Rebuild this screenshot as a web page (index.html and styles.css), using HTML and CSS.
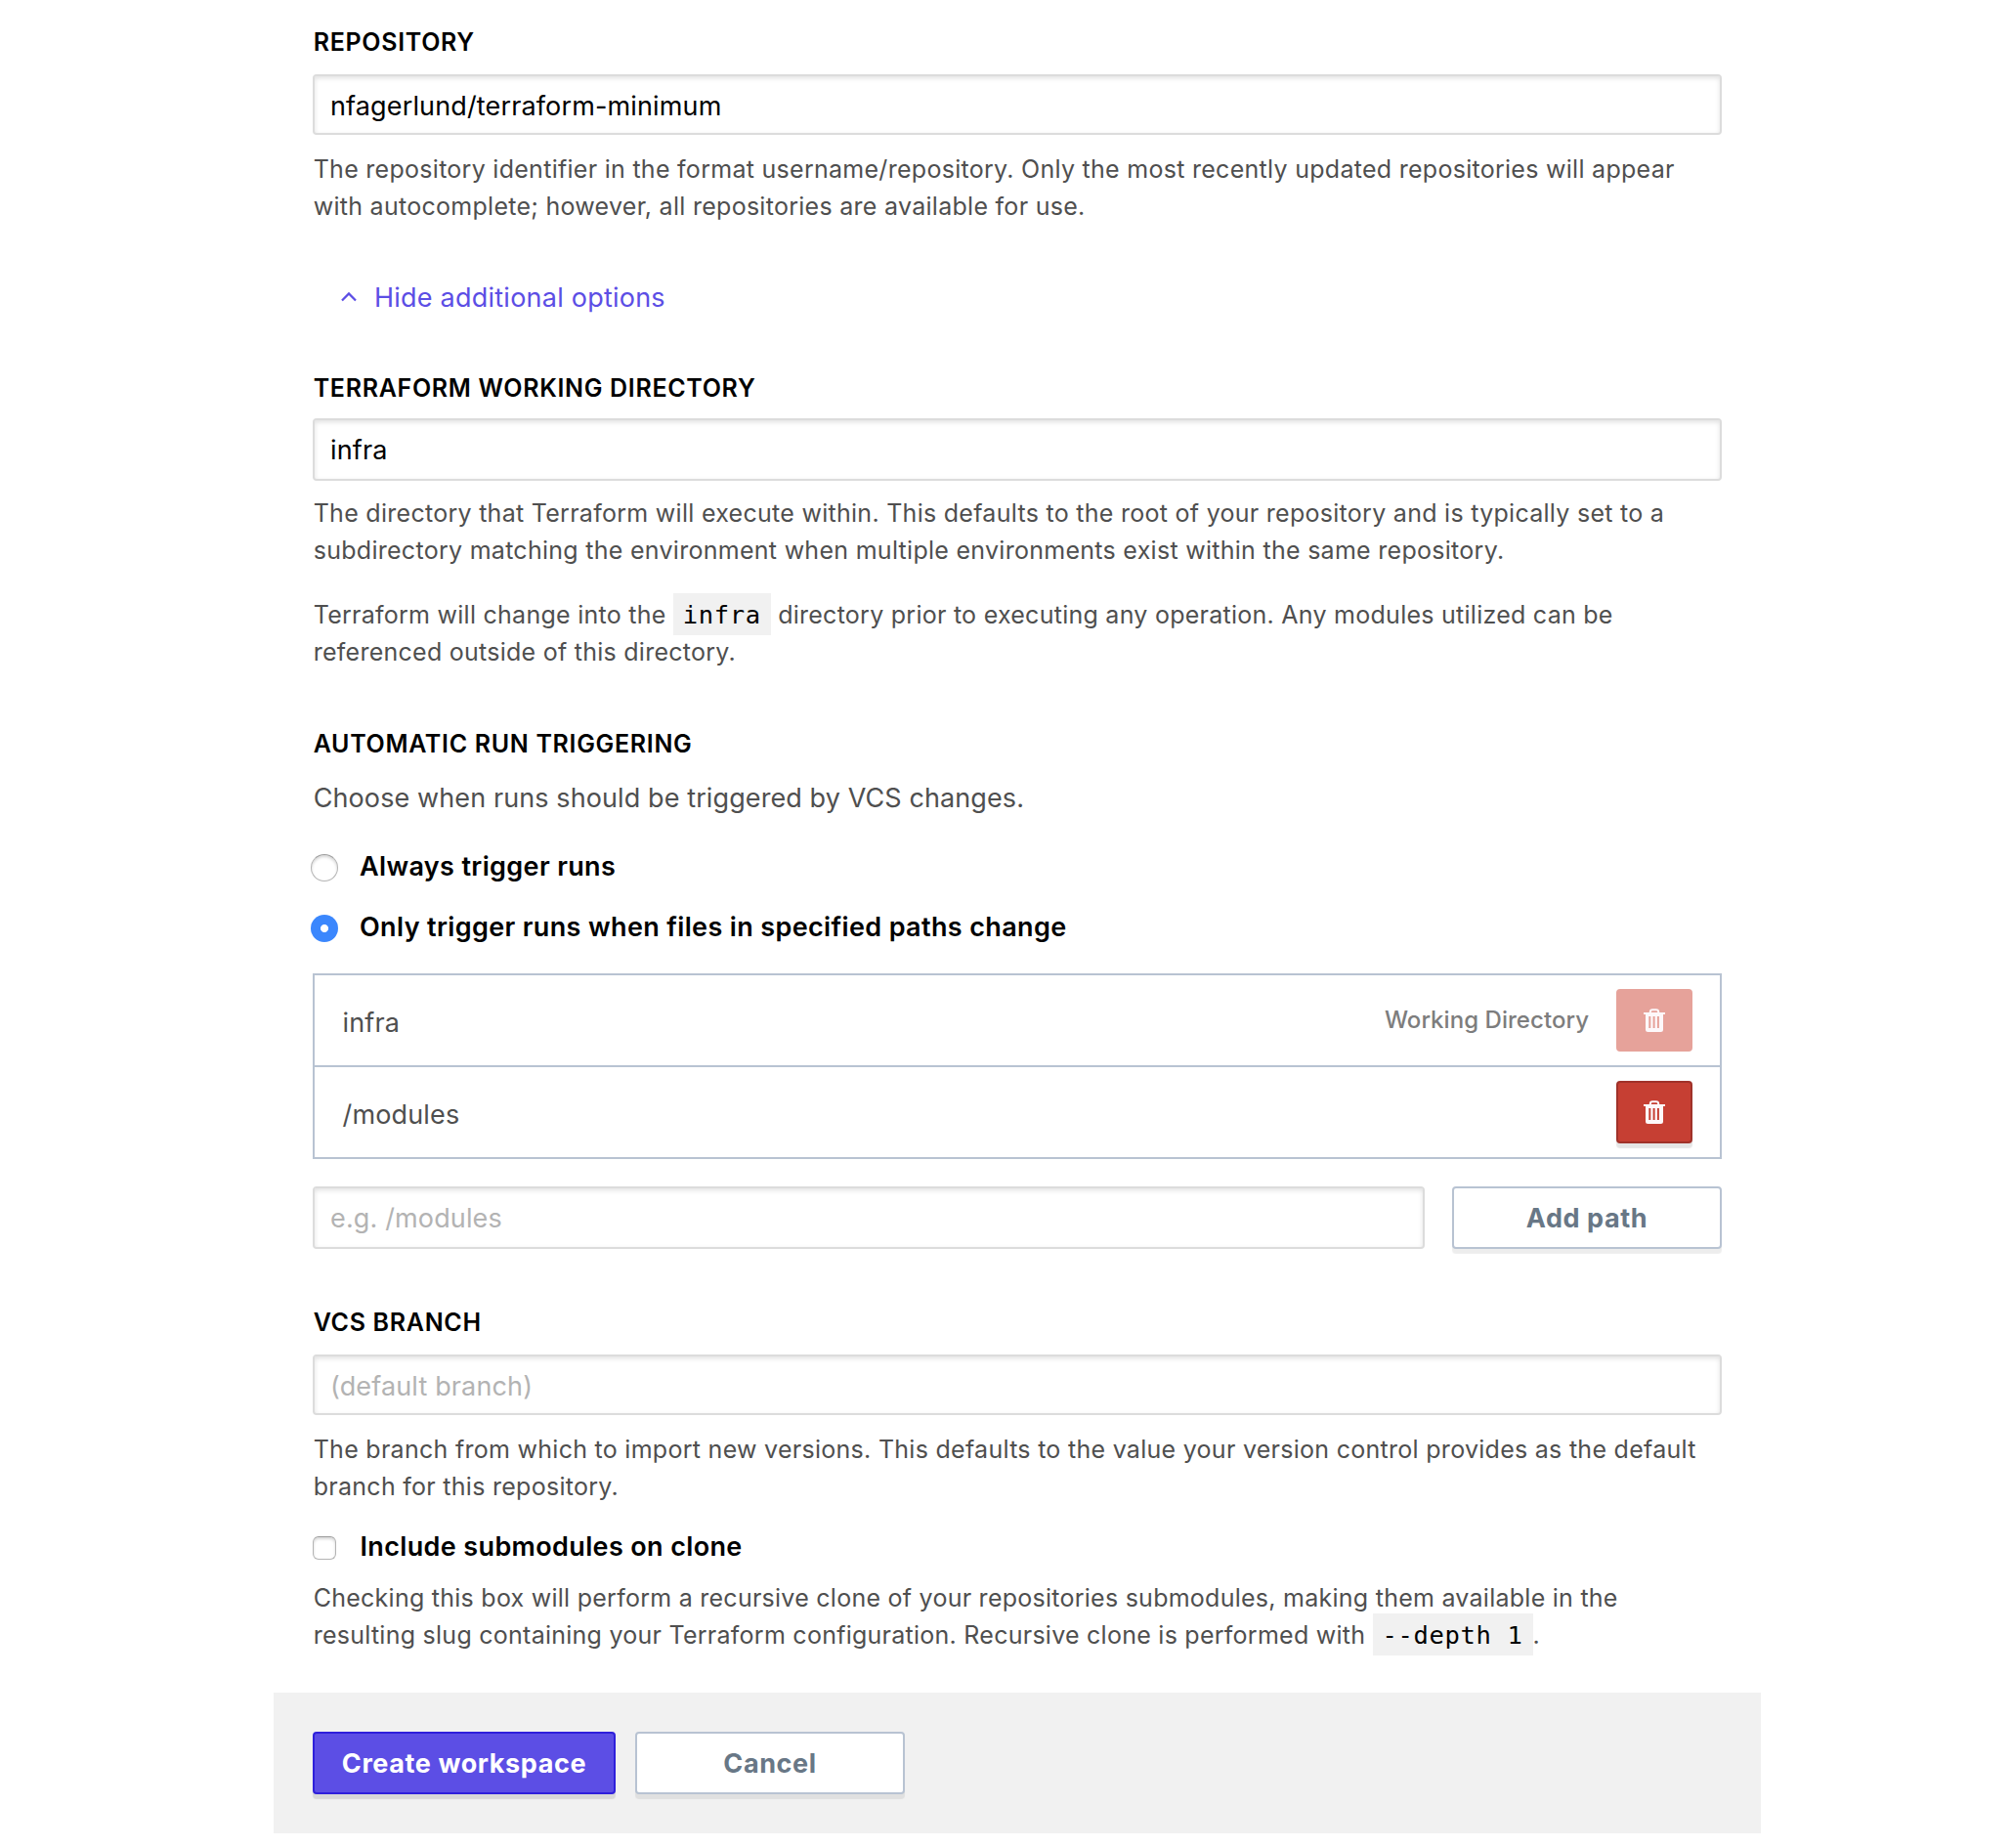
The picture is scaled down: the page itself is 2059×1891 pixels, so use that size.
FILE: index.html
```
<!DOCTYPE html>
<html lang="en">
<head>
<meta charset="utf-8">
<title>New workspace</title>
<link rel="stylesheet" href="styles.css">
</head>
<body>
<form class="page">
  <main class="fields">
    <label class="label" for="repo">REPOSITORY</label>
    <input class="input input-short" id="repo" type="text" value="nfagerlund/terraform-minimum">
    <p class="help">The repository identifier in the format username/repository. Only the most recently updated repositories will appear<br>with autocomplete; however, all repositories are available for use.</p>

    <a class="toggle"><svg class="chevron" width="18" height="12" viewBox="0 0 18 12"><path d="M2 9.600 9 2.400l7 7.200" fill="none" stroke="currentColor" stroke-width="2.200"/></svg>Hide additional options</a>

    <label class="label label-dir" for="dir">TERRAFORM WORKING DIRECTORY</label>
    <input class="input" id="dir" type="text" value="infra">
    <p class="help">The directory that Terraform will execute within. This defaults to the root of your repository and is typically set to a<br>subdirectory matching the environment when multiple environments exist within the same repository.</p>
    <p class="help help-next">Terraform will change into the <code>infra</code> directory prior to executing any operation. Any modules utilized can be<br>referenced outside of this directory.</p>

    <h2 class="label label-trigger">AUTOMATIC RUN TRIGGERING</h2>
    <p class="intro">Choose when runs should be triggered by VCS changes.</p>
    <label class="choice"><input class="radio" type="radio" name="trigger">Always trigger runs</label>
    <label class="choice choice-next"><input class="radio" type="radio" name="trigger" checked>Only trigger runs when files in specified paths change</label>

    <ul class="paths">
      <li class="path">
        <span class="path-name">infra</span>
        <span class="path-note">Working Directory</span>
        <button class="delete delete-off" type="button" aria-label="Delete infra" disabled>
          <svg width="22" height="24" viewBox="0 0 22 24"><path d="M6.8 5V3.6Q6.8 1.2 9.2 1.2h3.6q2.4 0 2.4 2.4V5" fill="none" stroke="currentColor" stroke-width="2"/><path fill="currentColor" fill-rule="evenodd" d="M0 4h22v2h-2v15.5q0 2.5-2.5 2.5h-13Q2 24 2 21.500V6H0zM5.300 8v12h2V8zM9.600 8v12h2V8zM13.900 8v12h2V8z"/></svg>
        </button>
      </li>
      <li class="path">
        <span class="path-name">/modules</span>
        <button class="delete" type="button" aria-label="Delete /modules">
          <svg width="22" height="24" viewBox="0 0 22 24"><path d="M6.8 5V3.6Q6.8 1.2 9.2 1.2h3.6q2.4 0 2.4 2.4V5" fill="none" stroke="currentColor" stroke-width="2"/><path fill="currentColor" fill-rule="evenodd" d="M0 4h22v2h-2v15.5q0 2.5-2.5 2.5h-13Q2 24 2 21.500V6H0zM5.300 8v12h2V8zM9.600 8v12h2V8zM13.900 8v12h2V8z"/></svg>
        </button>
      </li>
    </ul>
    <div class="add">
      <input class="input" type="text" placeholder="e.g. /modules">
      <button class="button button-plain" type="button">Add path</button>
    </div>

    <label class="label label-branch" for="branch">VCS BRANCH</label>
    <input class="input input-short" id="branch" type="text" placeholder="(default branch)">
    <p class="help">The branch from which to import new versions. This defaults to the value your version control provides as the default<br>branch for this repository.</p>
    <label class="choice choice-check"><input class="checkbox" type="checkbox">Include submodules on clone</label>
    <p class="help help-check">Checking this box will perform a recursive clone of your repositories submodules, making them available in the<br>resulting slug containing your Terraform configuration. Recursive clone is performed with <code>--depth 1</code>.</p>
  </main>
  <footer class="actions">
    <button class="button button-primary" type="button">Create workspace</button>
    <button class="button button-plain" type="button">Cancel</button>
  </footer>
</form>
</body>
</html>
```
FILE: styles.css
```
* {
  box-sizing: border-box;
}

body {
  margin: 0;
  background: #fff;
  color: #4f4f4f;
  font-family: Inter, "Liberation Sans", sans-serif;
}

input,
button {
  margin: 0;
  font-family: inherit;
}

.page {
  width: 1522px;
  margin-left: 280px;
}

.fields {
  display: flex;
  flex-direction: column;
  padding: 24px 40px 40px;
}

.label {
  margin: 0 0 14px;
  padding-left: 0.7px;
  color: #000;
  font-size: 25px;
  font-weight: 600;
  line-height: 38px;
  letter-spacing: 0.68px;
}

.label-dir {
  margin: 53px 0 12px;
}

.label-trigger {
  margin: 56px 0 17px;
}

.label-branch {
  margin-top: 56px;
}

.input {
  width: 100%;
  height: 64px;
  padding: 0 16px;
  border: 2px solid #dcdcdc;
  border-radius: 4px;
  background: #fff;
  box-shadow: inset 0 2px 5px rgba(0, 0, 0, 0.12);
  color: #000;
  font-size: 27px;
  letter-spacing: 0.14px;
  outline: none;
}

.input-short {
  height: 62px;
  padding-top: 2px;
}

.input::placeholder {
  color: #b3b3b3;
  opacity: 1;
}

.help {
  margin: 14px 0 0;
  padding-left: 0.7px;
  font-size: 25px;
  line-height: 38px;
  letter-spacing: 0.28px;
  white-space: nowrap;
}

.input-short + .help {
  margin-top: 16px;
}

.help-next {
  margin-top: 28px;
  letter-spacing: 0.26px;
}

.help-check {
  margin-top: 13px;
  letter-spacing: 0.256px;
}

code {
  padding: 7px 10px 6px;
  background: #f1f1f1;
  color: #000;
  font-family: "DejaVu Sans Mono", monospace;
  font-size: 25.5px;
  line-height: 1;
  letter-spacing: 0.65px;
}

.toggle {
  display: flex;
  align-items: center;
  gap: 17px;
  margin: 55px 0 0 28px;
  color: #5c4ee5;
  font-size: 27px;
  line-height: 40px;
  letter-spacing: 0.23px;
}

.chevron {
  margin-top: -2px;
}

.intro {
  margin: 0 0 30px;
  padding-left: 0.7px;
  font-size: 27px;
  line-height: 40px;
  letter-spacing: 0.1px;
}

.choice {
  display: flex;
  align-items: center;
  gap: 22px;
  color: #000;
  font-size: 27px;
  font-weight: 600;
  line-height: 40px;
  letter-spacing: 0.36px;
}

.choice-next {
  margin-top: 22px;
}

.choice-check {
  gap: 24.5px;
  margin-top: 23px;
}

.radio,
.checkbox {
  flex: none;
  appearance: none;
  border: 1px solid #b4b4b4;
  border-top-color: #9c9c9c;
  background: #fff;
  box-shadow: inset 0 2px 3px rgba(0, 0, 0, 0.16);
}

.radio {
  width: 28px;
  height: 28px;
  margin: 2px 0 0 -2px;
  border-radius: 50%;
}

.radio:checked {
  border: 0;
  background: radial-gradient(circle, #fff 3.6px, #3b87fd 4.4px);
  box-shadow: none;
}

.checkbox {
  width: 24px;
  height: 24px;
  margin-top: 2px;
  border-radius: 6px;
}

.paths {
  margin: 27px 0 28px;
  padding: 0;
  border: 2px solid #b8c3d2;
  list-style: none;
}

.path {
  display: flex;
  align-items: center;
  height: 92px;
  padding: 0 28px;
}

.path + .path {
  height: 94px;
  border-top: 2px solid #b8c3d2;
}

.path-name {
  flex: 1;
  padding: 6px 0 0 0.5px;
  font-size: 27px;
  line-height: 40px;
  letter-spacing: 0.15px;
}

.path-note {
  margin-right: 28px;
  color: #7d7d7d;
  font-size: 24px;
  font-weight: 500;
  line-height: 38px;
  letter-spacing: 0.05px;
}

.delete {
  display: flex;
  align-items: center;
  justify-content: center;
  width: 78px;
  height: 64px;
  padding: 0;
  border: 2px solid #a0322a;
  border-radius: 4px;
  background: #c63f33;
  box-shadow: 0 5px 1px rgba(0, 0, 0, 0.1);
  color: #fdf8fa;
}

.delete-off {
  border-color: #e6a29a;
  background: #e6a29a;
  box-shadow: none;
}

.add {
  display: flex;
  gap: 28px;
}

.add .input {
  flex: 1;
}

.button {
  height: 64px;
  padding: 0;
  border: 2px solid;
  border-radius: 4px;
  font-size: 27px;
  font-weight: 700;
  letter-spacing: 0.6px;
}

.button-plain {
  width: 276px;
  border-color: #b8c3d2;
  background: #fff;
  box-shadow: 0 5px 1px rgba(0, 0, 0, 0.07);
  color: #687786;
}

.button-primary {
  width: 310px;
  border-color: #2f20db;
  background: #5c4ee5;
  box-shadow: 0 5px 1px rgba(0, 0, 0, 0.1);
  color: #fff;
}

.actions {
  display: flex;
  gap: 20px;
  height: 144px;
  padding: 40px;
  background: #f1f1f1;
}
```
